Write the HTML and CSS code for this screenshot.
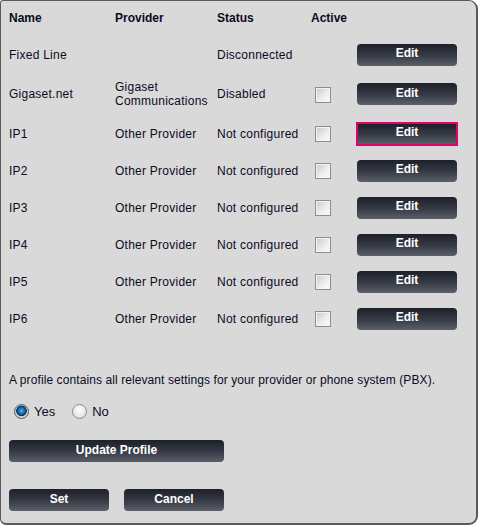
FILE: index.html
```html
<!DOCTYPE html>
<html>
<head>
<meta charset="utf-8">
<link rel="stylesheet" href="styles.css">
</head>
<body>
<div class="panel">
  <table class="grid">
    <thead>
      <tr class="head">
        <th class="c-name">Name</th>
        <th class="c-prov">Provider</th>
        <th class="c-stat">Status</th>
        <th class="c-act">Active</th>
        <th class="c-btn"></th>
      </tr>
    </thead>
    <tbody>
      <tr>
        <td>Fixed Line</td><td></td><td>Disconnected</td><td></td>
        <td><button class="btn btn-edit">Edit</button></td>
      </tr>
      <tr class="tall">
        <td>Gigaset.net</td><td>Gigaset<br>Communications</td><td>Disabled</td>
        <td><span class="chk"></span></td>
        <td><button class="btn btn-edit">Edit</button></td>
      </tr>
      <tr>
        <td>IP1</td><td>Other Provider</td><td>Not configured</td>
        <td><span class="chk"></span></td>
        <td><button class="btn btn-edit focus">Edit</button></td>
      </tr>
      <tr>
        <td>IP2</td><td>Other Provider</td><td>Not configured</td>
        <td><span class="chk"></span></td>
        <td><button class="btn btn-edit">Edit</button></td>
      </tr>
      <tr>
        <td>IP3</td><td>Other Provider</td><td>Not configured</td>
        <td><span class="chk"></span></td>
        <td><button class="btn btn-edit">Edit</button></td>
      </tr>
      <tr>
        <td>IP4</td><td>Other Provider</td><td>Not configured</td>
        <td><span class="chk"></span></td>
        <td><button class="btn btn-edit">Edit</button></td>
      </tr>
      <tr>
        <td>IP5</td><td>Other Provider</td><td>Not configured</td>
        <td><span class="chk"></span></td>
        <td><button class="btn btn-edit">Edit</button></td>
      </tr>
      <tr>
        <td>IP6</td><td>Other Provider</td><td>Not configured</td>
        <td><span class="chk"></span></td>
        <td><button class="btn btn-edit">Edit</button></td>
      </tr>
    </tbody>
  </table>

  <p class="note">A profile contains all relevant settings for your provider or phone system (PBX).</p>

  <div class="radios">
    <label class="radio"><span class="dot on"></span>Yes</label>
    <label class="radio"><span class="dot"></span>No</label>
  </div>

  <button class="btn btn-wide">Update Profile</button>

  <div class="actions">
    <button class="btn btn-act">Set</button>
    <button class="btn btn-act">Cancel</button>
  </div>
</div>
</body>
</html>
```
FILE: styles.css
```css
html, body {
  margin: 0;
  padding: 0;
  background: #ffffff;
}
body {
  font-family: Arial, "Liberation Sans", sans-serif;
  font-size: 12px;
  color: #0b0b1e;
}
.panel {
  box-sizing: border-box;
  width: 478px;
  height: 525px;
  background: #d9d9d9;
  border: 1px solid #5a5a5a;
  border-right-width: 2px;
  border-bottom-width: 2px;
  border-radius: 3px 9px 9px 6px;
  padding: 0 0 0 8px;
}
.grid {
  border-collapse: collapse;
  table-layout: fixed;
  width: 450px;
}
.grid th, .grid td {
  padding: 0;
  text-align: left;
  vertical-align: middle;
  line-height: 14px;
}
.grid th {
  font-weight: bold;
  height: 33px;
  padding-bottom: 2px;
}
.grid td {
  height: 37px;
  letter-spacing: 0.25px;
}
.grid tr.tall td { height: 42px; }
.c-name { width: 106px; }
.c-prov { width: 102px; }
.c-stat { width: 94px; }
.c-act { width: 46px; }
.c-btn { width: 102px; }

.chk {
  display: block;
  box-sizing: border-box;
  width: 16px;
  height: 16px;
  margin-left: 4px;
  margin-top: 1px;
  border: 1px solid #8e8e8e;
  background: linear-gradient(135deg, #c8c8c8 0%, #ececec 55%, #ffffff 100%);
  box-shadow: inset 0 0 0 1px #f4f4f4;
}

.btn {
  display: block;
  box-sizing: border-box;
  height: 22px;
  border: none;
  border-radius: 4px;
  background: linear-gradient(to bottom, #1d2029 0%, #353944 50%, #5a5f6a 100%);
  color: #ffffff;
  font-family: Arial, "Liberation Sans", sans-serif;
  font-weight: bold;
  font-size: 12px;
  line-height: 18px;
  padding: 0 0 3px 0;
  text-align: center;
  letter-spacing: 0;
}
.btn-edit {
  width: 100px;
  margin-left: 0;
}
.btn-edit.focus {
  width: 102px;
  height: 24px;
  margin-left: -1px;
  border: 2px solid #e2006a;
  border-radius: 0;
  line-height: 16px;
}

.note {
  margin: 36px 0 0 0;
  line-height: 14px;
  letter-spacing: 0.09px;
}
.radios {
  display: flex;
  align-items: center;
  margin-top: 17px;
  margin-left: 5px;
  gap: 17px;
}
.radio {
  display: flex;
  align-items: center;
  gap: 5px;
  font-size: 13px;
}
.dot {
  box-sizing: border-box;
  width: 15px;
  height: 15px;
  border-radius: 50%;
  border: 1px solid #8e8e8e;
  background: radial-gradient(circle at 50% 40%, #ffffff 0%, #e8e8e8 60%, #c8c8c8 100%);
}
.dot.on {
  border-color: #505a66;
  background: radial-gradient(circle at 50% 45%, #4fb0ee 0, #1a78c2 2.5px, #0a4f8c 4px, #1e2e40 5px, #c9ccd0 5.6px, #f4f4f4 100%);
}
.btn-wide {
  width: 215px;
  margin-top: 21px;
}
.actions {
  display: flex;
  gap: 15px;
  margin-top: 27px;
}
.btn-act { width: 100px; }
```
